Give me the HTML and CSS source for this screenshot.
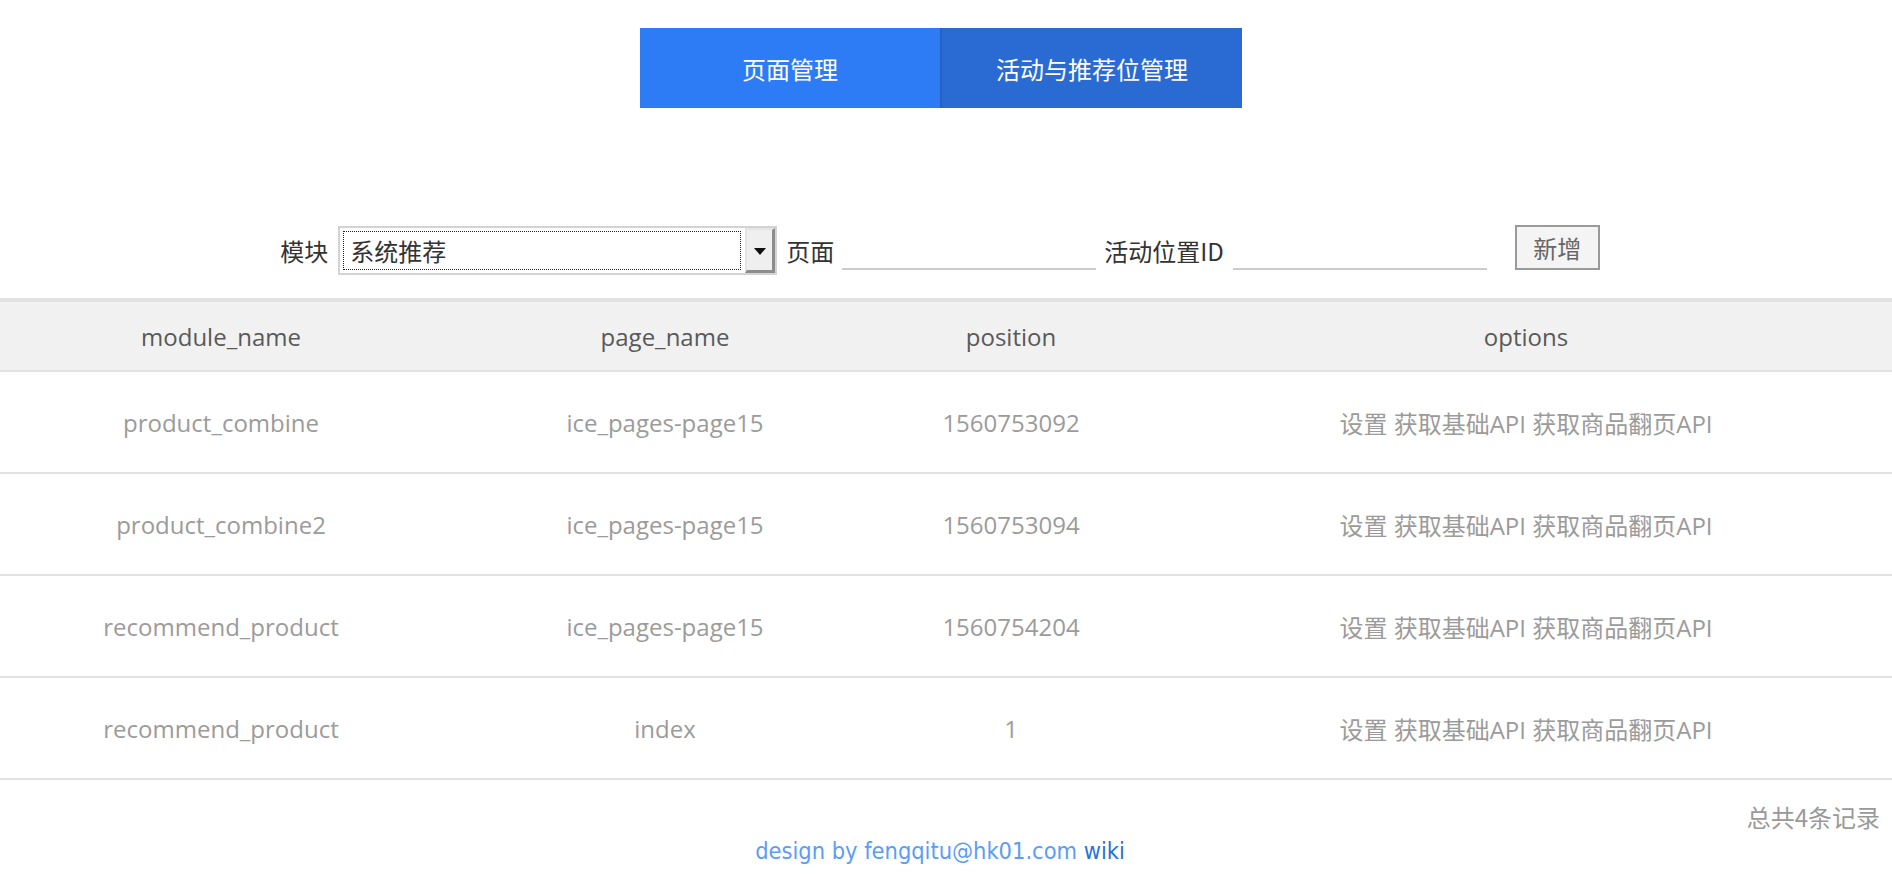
FILE: index.html
```html
<!DOCTYPE html>
<html lang="zh-CN">
<head>
<meta charset="utf-8">
<title>活动与推荐位管理</title>
<link rel="stylesheet" href="styles.css">
</head>
<body>
<div class="wrap">
  <nav class="tabs">
    <a class="tab tab-active">页面管理</a>
    <a class="tab tab-second">活动与推荐位管理</a>
  </nav>
  <form class="filter">
    <span class="label">模块</span>
    <div class="select">
      <div class="select-value">系统推荐</div>
      <div class="select-arrow"><span class="tri"></span></div>
    </div>
    <span class="label label-page">页面</span>
    <div class="input input-page"></div>
    <span class="label label-pos">活动位置ID</span>
    <div class="input input-pos"></div>
    <button type="button" class="btn">新增</button>
  </form>
</div>
<table class="grid">
  <colgroup>
    <col class="c1"><col class="c2"><col class="c3"><col class="c4">
  </colgroup>
  <thead>
    <tr><th>module_name</th><th>page_name</th><th>position</th><th class="opt">options</th></tr>
  </thead>
  <tbody>
    <tr><td>product_combine</td><td>ice_pages-page15</td><td>1560753092</td><td class="opt">设置 获取基础API 获取商品翻页API</td></tr>
    <tr><td>product_combine2</td><td>ice_pages-page15</td><td>1560753094</td><td class="opt">设置 获取基础API 获取商品翻页API</td></tr>
    <tr><td>recommend_product</td><td>ice_pages-page15</td><td>1560754204</td><td class="opt">设置 获取基础API 获取商品翻页API</td></tr>
    <tr><td>recommend_product</td><td>index</td><td>1</td><td class="opt">设置 获取基础API 获取商品翻页API</td></tr>
  </tbody>
</table>
<div class="wrap">
  <div class="summary">总共4条记录</div>
  <footer class="footer">design by fengqitu@hk01.com <a class="wiki">wiki</a></footer>
</div>
</body>
</html>
```
FILE: styles.css
```css
html, body {
  margin: 0;
  padding: 0;
  background: #fff;
}
body {
  font-family: "Open Sans", "Noto Sans CJK SC", sans-serif;
  color: #333;
}
.wrap {
  width: 1880px;
}
.tabs {
  display: flex;
  justify-content: center;
  padding-top: 28px;
  padding-left: 2px;
}
.tab {
  width: 300px;
  height: 80px;
  display: flex;
  align-items: center;
  justify-content: center;
  color: #fff;
  font-family: "Noto Sans CJK SC", sans-serif;
  font-size: 24px;
  box-sizing: border-box;
}
.tab-active {
  background: #2d7cf6;
}
.tab-second {
  width: 302px;
  background: #2a6bd3;
  border-left: 2px solid #2560c2;
}
.filter {
  display: flex;
  align-items: center;
  justify-content: center;
  height: 49px;
  margin: 118px 0 0;
  padding-bottom: 23px;
  box-sizing: content-box;
}
.label {
  font-family: "Noto Sans CJK SC", sans-serif;
  font-size: 24px;
  color: #333;
  line-height: 1;
}
.select {
  display: flex;
  width: 439px;
  height: 49px;
  box-sizing: border-box;
  border: 2px solid #d3d3d3;
  margin-left: 10px;
  background: #fff;
}
.select-value {
  flex: 1;
  margin: 3px 4px 3px 3px;
  border: 1px dotted #222;
  padding-left: 6px;
  display: flex;
  align-items: center;
  font-family: "Noto Sans CJK SC", sans-serif;
  font-size: 24px;
  color: #333;
}
.select-arrow {
  width: 30px;
  box-sizing: border-box;
  background: #efefef;
  border-style: solid;
  border-width: 2px 3px 3px 2px;
  border-color: #e4e4e4 #8c8c8c #8c8c8c #e4e4e4;
  display: flex;
  align-items: center;
  justify-content: center;
}
.tri {
  width: 0;
  height: 0;
  border-left: 6px solid transparent;
  border-right: 6px solid transparent;
  border-top: 7px solid #111;
  margin-top: 2px;
}
.label-page {
  margin-left: 9px;
}
.input {
  height: 36px;
  box-sizing: border-box;
  border-bottom: 2px solid #cccccc;
  margin-top: 2px;
}
.input-page {
  width: 254px;
  margin-left: 8px;
}
.label-pos {
  margin-left: 8px;
}
.input-pos {
  width: 254px;
  margin-left: 9px;
}
.btn {
  width: 85px;
  height: 45px;
  margin-left: 28px;
  margin-bottom: 6px;
  border: 2px solid #9a9a9a;
  background: #f4f4f4;
  color: #666;
  font-family: "Noto Sans CJK SC", sans-serif;
  font-size: 24px;
  padding: 0;
}
.grid {
  width: 100%;
  border-collapse: collapse;
  table-layout: fixed;
  border-top: 4px solid #e2e2e2;
}
.c1 { width: 442px; }
.c2 { width: 446px; }
.c3 { width: 246px; }
.grid th {
  height: 68px;
  padding: 0;
  background: #f1f1f1;
  border-bottom: 2px solid #e2e2e2;
  font-weight: normal;
  font-size: 24px;
  color: #595959;
  text-align: center;
}
.grid td {
  height: 100px;
  padding: 0;
  border-bottom: 2px solid #e2e2e2;
  font-size: 24px;
  color: #9b9b9b;
  text-align: center;
}
.grid .opt {
  padding-left: 26px;
}
.summary {
  text-align: right;
  font-family: "Noto Sans CJK SC", sans-serif;
  font-size: 24px;
  color: #999;
  padding-top: 21px;
  line-height: 32px;
}
.footer {
  text-align: center;
  font-family: "DejaVu Sans Condensed", "DejaVu Sans", sans-serif;
  font-size: 23.4px;
  color: #5b9cf8;
  margin-top: 2px;
  line-height: 32px;
}
.wiki {
  color: #2a6fd6;
}
```
